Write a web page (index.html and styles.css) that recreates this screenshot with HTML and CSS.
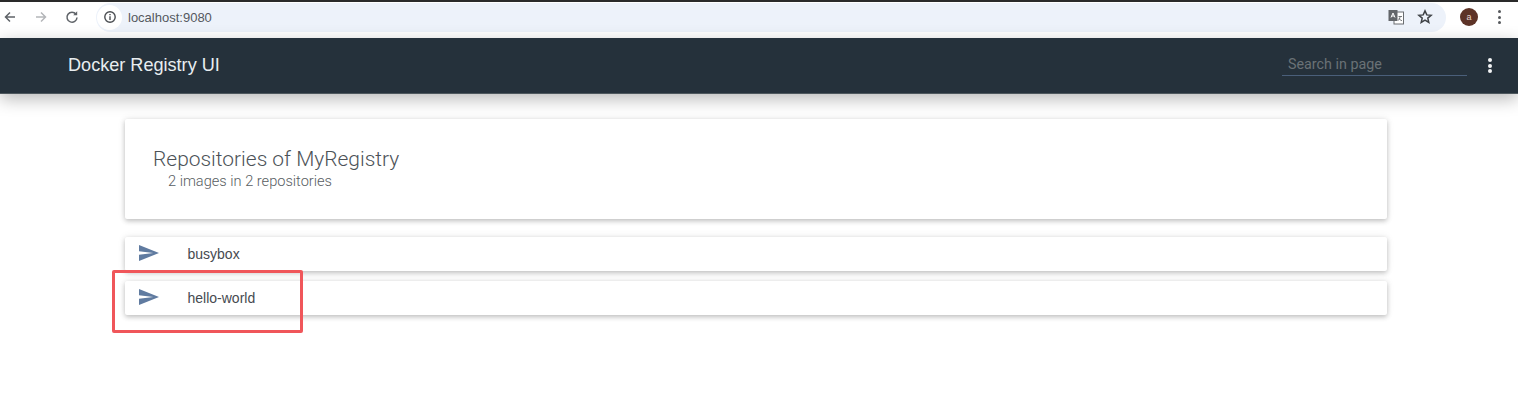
FILE: index.html
```html
<!DOCTYPE html>
<html lang="en">
<head>
<meta charset="utf-8">
<title>Docker Registry UI</title>
<link rel="stylesheet" href="styles.css">
</head>
<body>
<div class="browser">
  <svg class="nav-icon back" viewBox="0 0 14 14"><path d="M12 7H3M7 2.500 2.500 7 7 11.500"/></svg>
  <svg class="nav-icon forward" viewBox="0 0 14 14"><path d="M2 7h9M7 2.500 11.500 7 7 11.500"/></svg>
  <svg class="nav-icon reload" viewBox="0 0 14 14"><path d="M11 4.200A5 5 0 1 0 12 7.500"/><path class="solid" d="M8.200 5.200h4v-4z"/></svg>
  <div class="omnibox">
    <span class="info-chip"><svg class="info" viewBox="0 0 14 14"><circle cx="7" cy="7" r="5.200"/><path d="M7 6.300v3.600M7 4v1.200"/></svg></span>
    <span class="url">localhost:9080</span>
    <svg class="translate" viewBox="0 0 16 16"><rect class="t-back" x="6" y="3" width="9.500" height="12"/><rect class="t-front" x="0.500" y="1" width="9" height="11"/><path class="t-mark" d="M3 8.500 5 4l2 4.500M3.700 7h2.600"/><path class="t-line" d="M10.500 7.500h3.500M12 7.500c0 2-1 3.500-2 4M11 9.500c.6 1 1.500 1.600 3 2.200"/></svg>
    <svg class="star" viewBox="0 0 16 16"><path d="M8 1.900l1.800 4 4.300.4-3.300 2.800 1 4.300L8 11.100l-3.800 2.300 1-4.300-3.300-2.800 4.300-.4z"/></svg>
  </div>
  <span class="avatar">a</span>
  <span class="chrome-menu"><i></i><i></i><i></i></span>
</div>

<header class="topbar">
  <span class="brand">Docker Registry UI</span>
  <div class="topbar-actions">
    <span class="search">Search in page</span>
    <span class="page-menu"><i></i><i></i><i></i></span>
  </div>
</header>

<main class="content">
  <section class="summary">
    <h1>Repositories of MyRegistry</h1>
    <p>2 images in 2 repositories</p>
  </section>
  <ul class="repos">
    <li class="repo">
      <svg class="send" viewBox="2 3 21 18" preserveAspectRatio="none"><path d="M2 21l21-9L2 3v7l15 2-15 2z"/></svg>
      <span>busybox</span>
    </li>
    <li class="repo">
      <svg class="send" viewBox="2 3 21 18" preserveAspectRatio="none"><path d="M2 21l21-9L2 3v7l15 2-15 2z"/></svg>
      <span>hello-world</span>
    </li>
  </ul>
</main>
<div class="highlight"></div>
</body>
</html>
```
FILE: styles.css
```css
* { box-sizing: border-box; }
html, body { margin: 0; padding: 0; }
body {
  width: 1518px;
  height: 412px;
  overflow: hidden;
  position: relative;
  background: #fff;
  font-family: "Liberation Sans", Arial, sans-serif;
}

.browser {
  height: 38px;
  border-top: 2px solid #2a2a2a;
  padding: 0 0 6px 3px;
  display: flex;
  align-items: center;
  background: #fff;
}
.nav-icon { width: 14px; height: 14px; fill: none; stroke: #5f6368; stroke-width: 1.500; }
.nav-icon .solid { fill: #5f6368; stroke: none; }
.back { margin-right: 17px; }
.forward { stroke: #b4b6b9; margin-right: 17px; }
.reload { margin-right: 17px; }
.omnibox {
  width: 1350px;
  height: 29px;
  border-radius: 15px;
  background: #edf2fa;
  display: flex;
  align-items: center;
  padding: 0 13px 0 1px;
}
.info-chip {
  width: 25px;
  height: 25px;
  border-radius: 50%;
  background: #fff;
  display: flex;
  align-items: center;
  justify-content: center;
}
.info { width: 14px; height: 14px; fill: none; stroke: #4a4d51; stroke-width: 1.400; }
.url {
  margin-left: 6px;
  font-size: 13px;
  color: #54585e;
  flex: 1;
}
.translate { width: 16px; height: 16px; margin-right: 13px; }
.t-back { fill: #fff; stroke: #6a6d70; stroke-width: 1; }
.t-front { fill: #63666a; }
.t-mark { fill: none; stroke: #fff; stroke-width: 1; }
.t-line { fill: none; stroke: #55585c; stroke-width: 0.800; }
.star { width: 16px; height: 16px; fill: none; stroke: #3f4246; stroke-width: 1.500; }
.avatar {
  width: 18px;
  height: 18px;
  margin-left: 14px;
  border-radius: 50%;
  background: #5d3327;
  color: #e6d8d2;
  font-size: 9px;
  line-height: 18px;
  text-align: center;
}
.chrome-menu {
  margin-left: 20px;
  display: flex;
  flex-direction: column;
  gap: 2.500px;
}
.chrome-menu i { width: 3px; height: 3px; border-radius: 50%; background: #55585c; }

.topbar {
  height: 56px;
  padding: 0 26px 0 68px;
  display: flex;
  align-items: center;
  justify-content: space-between;
  background: #25313b;
  border-bottom: 1px solid #4d575d;
  box-shadow: 0 5px 16px rgba(0, 0, 0, .28);
  position: relative;
}
.brand { font-size: 18.100px; color: #e8edf0; position: relative; }
.topbar-actions { display: flex; align-items: center; }
.search {
  width: 185px;
  height: 24px;
  margin-top: -3px;
  padding: 0 0 0 6px;
  border-bottom: 1px solid #4a5f7a;
  color: #6a7276;
  font-family: Roboto, sans-serif;
  font-size: 14.300px;
  line-height: 25px;
  margin-right: 21px;
}
.page-menu { display: flex; flex-direction: column; gap: 1.500px; }
.page-menu i { width: 4px; height: 4px; border-radius: 50%; background: #f2f4f5; }

.content {
  width: 1262px;
  margin: 25px 0 0 125px;
}
.summary {
  height: 100px;
  padding: 28px 28px 0;
  background: #fff;
  box-shadow: 0 2px 5px rgba(0, 0, 0, .22), 0 0 9px rgba(0, 0, 0, .08);
  border-radius: 2px;
  font-family: Roboto, sans-serif;
  font-weight: 300;
}
.summary h1 {
  margin: 0;
  font-size: 20.950px;
  line-height: 24px;
  font-weight: 300;
  color: #4c5257;
}
.summary p {
  margin: 2px 0 0 15px;
  font-size: 14.600px;
  line-height: 17px;
  color: #585d62;
}
.repos {
  list-style: none;
  margin: 18px 0 0;
  padding: 0;
  display: flex;
  flex-direction: column;
  gap: 10px;
}
.repo {
  height: 34px;
  padding-left: 14px;
  display: flex;
  align-items: center;
  background: #fff;
  box-shadow: 0 2px 5px rgba(0, 0, 0, .22), 0 0 9px rgba(0, 0, 0, .08);
  border-radius: 2px;
  font-size: 14px;
  color: #464a50;
}
.repo span { margin-left: 28.500px; }
.send { width: 20px; height: 16px; fill: #607ba0; margin-top: -2px; }

.highlight {
  position: absolute;
  left: 112px;
  top: 270px;
  width: 191px;
  height: 63px;
  border: 3px solid #f0565a;
  border-radius: 2px;
}
```
